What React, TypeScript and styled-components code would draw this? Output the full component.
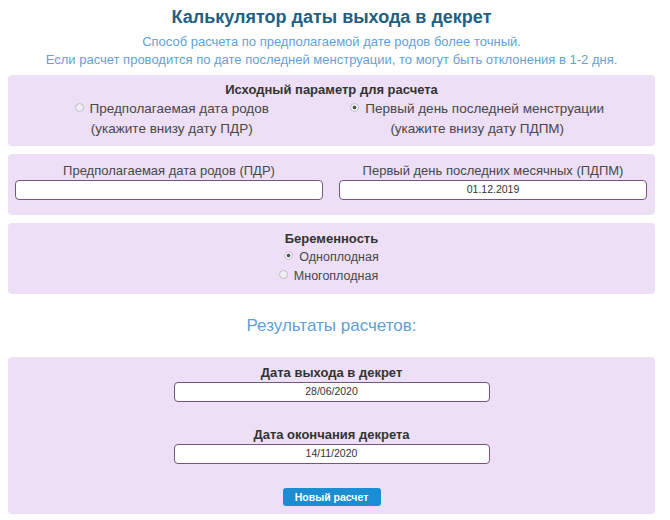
import * as React from 'react';
import styled, { createGlobalStyle } from 'styled-components';

const GlobalStyle = createGlobalStyle`
  body {
    margin: 0;
    background: #ffffff;
    font-family: "Liberation Sans", Arial, sans-serif;
    color: #333;
  }
`;

const Page = styled.div`
  width: 670px;
  padding: 0 15px 0 8px;
  box-sizing: border-box;
`;

const Title = styled.h1`
  margin: 0;
  padding-top: 6px;
  height: 29px;
  box-sizing: border-box;
  text-align: center;
  font-size: 18px;
  font-weight: bold;
  color: #1f5f84;
  line-height: 22px;
`;

const Subtitle = styled.p`
  margin: 4px 0 6px;
  text-align: center;
  font-size: 13px;
  line-height: 18px;
  color: #649fd4;
`;

const Panel = styled.section<{ $pad?: string }>`
  background: #ecdff6;
  border-radius: 4px;
  padding: ${p => p.$pad || '8px'};
  margin-bottom: 8px;
`;

const PanelTitle = styled.div`
  text-align: center;
  font-size: 13px;
  font-weight: bold;
  color: #333;
  line-height: 18px;
`;

const Columns = styled.div`
  display: grid;
  grid-template-columns: 1fr 1fr;
`;

const OptionCell = styled.div<{ $shift?: number }>`
  text-align: center;
  font-size: 13.5px;
  line-height: 20px;
  color: #484848;
  transform: translateX(${p => p.$shift || 0}px);
`;

const Radio = styled.span<{ $checked?: boolean }>`
  display: inline-block;
  width: 7px;
  height: 7px;
  border-radius: 50%;
  border: 1px solid #c4bccb;
  background: ${p => (p.$checked ? 'radial-gradient(circle, #555 0 1.6px, #f4f4f4 2.2px)' : '#f1eff3')};
  margin-right: 6px;
  vertical-align: 1px;
`;

const FieldGrid = styled.div`
  display: grid;
  grid-template-columns: 1fr 1fr;
  column-gap: 16px;
`;

const Field = styled.label`
  display: flex;
  flex-direction: column;
  align-items: center;
  font-size: 13px;
  color: #484848;
  line-height: 18px;
`;

const DateBox = styled.div<{ $width?: string }>`
  width: ${p => p.$width || '100%'};
  height: 20px;
  box-sizing: border-box;
  border: 1.5px solid #765584;
  border-radius: 4px;
  background: #fff;
  font-size: 10.5px;
  line-height: 17px;
  text-align: center;
  color: #333;
`;

const Stack = styled.div`
  display: flex;
  flex-direction: column;
  align-items: center;
  font-size: 12.5px;
  line-height: 19px;
  color: #484848;
`;

const ShiftedOption = styled.span`
  margin-left: -6px;
`;

const ResultsHeading = styled.h2`
  margin: 0;
  padding: 14px 0 21px;
  text-align: center;
  font-size: 17px;
  font-weight: normal;
  color: #5f9fd6;
  line-height: 20px;
`;

const ResultLabel = styled.div`
  font-size: 13px;
  font-weight: bold;
  color: #333;
  line-height: 18px;
`;

const ResultBlock = styled.div`
  display: flex;
  flex-direction: column;
  align-items: center;
  margin-bottom: 24px;
`;

const Button = styled.button`
  width: 98px;
  height: 18px;
  border: none;
  border-radius: 3px;
  background: #1a8dd3;
  color: #fff;
  font-family: "Liberation Sans", Arial, sans-serif;
  font-size: 10.5px;
  font-weight: bold;
  padding: 0;
  cursor: pointer;
`;

const results = [
  { label: 'Дата выхода в декрет', value: '28/06/2020' },
  { label: 'Дата окончания декрета', value: '14/11/2020' },
];

export default function App() {
  return (
    <Page>
      <GlobalStyle />
      <Title>Калькулятор даты выхода в декрет</Title>
      <Subtitle>
        Способ расчета по предполагаемой дате родов более точный.
        <br />
        Если расчет проводится по дате последней менструации, то могут быть отклонения в 1-2 дня.
      </Subtitle>

      <Panel $pad="6px 8px 7px">
        <PanelTitle>Исходный параметр для расчета</PanelTitle>
        <Columns>
          <OptionCell $shift={-2}>
            <Radio />Предполагаемая дата родов
            <br />
            (укажите внизу дату ПДР)
          </OptionCell>
          <OptionCell $shift={-12}>
            <Radio $checked />Первый день последней менструации
            <br />
            (укажите внизу дату ПДПМ)
          </OptionCell>
        </Columns>
      </Panel>

      <Panel $pad="8px 8px 15px 7px">
        <FieldGrid>
          <Field>
            Предполагаемая дата родов (ПДР)
            <DateBox />
          </Field>
          <Field>
            Первый день последних месячных (ПДПМ)
            <DateBox>01.12.2019</DateBox>
          </Field>
        </FieldGrid>
      </Panel>

      <Panel $pad="7px 8px 8px">
        <PanelTitle>Беременность</PanelTitle>
        <Stack>
          <span><Radio $checked />Одноплодная</span>
          <ShiftedOption><Radio />Многоплодная</ShiftedOption>
        </Stack>
      </Panel>

      <ResultsHeading>Результаты расчетов:</ResultsHeading>

      <Panel $pad="7px 8px 8px">
        {results.map(r => (
          <ResultBlock key={r.label}>
            <ResultLabel>{r.label}</ResultLabel>
            <DateBox $width="316px">{r.value}</DateBox>
          </ResultBlock>
        ))}
        <Stack>
          <Button>Новый расчет</Button>
        </Stack>
      </Panel>
    </Page>
  );
}
